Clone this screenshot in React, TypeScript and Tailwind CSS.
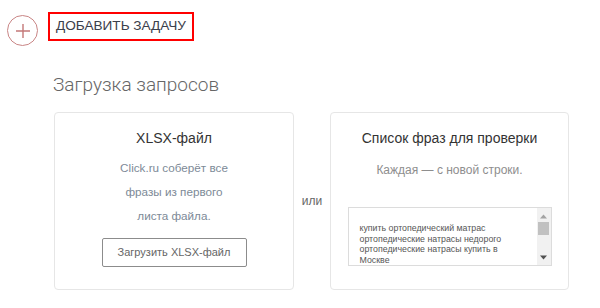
import React from "react";

export default function App() {
  return (
    <div className="w-[600px] h-[308px] bg-white overflow-hidden font-['Liberation_Sans',Arial,sans-serif]">
      <div className="flex items-start pt-[12px] pl-[7px]">
        <div className="mt-[3px] w-[31px] h-[31px] rounded-full border-[1.5px] border-[#c98585] flex items-center justify-center">
          <svg width="16" height="16" viewBox="0 0 16 16">
            <path d="M8 1v14M1 8h14" stroke="#c47878" strokeWidth="1.4" fill="none" />
          </svg>
        </div>
        <div className="ml-[10px] w-[146px] h-[29px] border-2 border-[#ff0000] flex items-center justify-center text-[13.6px] text-[#3b404a]">
          ДОБАВИТЬ ЗАДАЧУ
        </div>
      </div>

      <div className="ml-[53px] mt-[28px] h-[22px] leading-[22px] text-[19px] font-light text-[#666] font-['Roboto',sans-serif]">
        Загрузка запросов
      </div>

      <div className="ml-[54px] mt-[16px] flex items-center">
        <div className="w-[240px] h-[178px] border border-[#e6e6e6] rounded-[4px] flex flex-col items-center pt-[15px]">
          <div className="text-[14px] leading-[20px] text-[#333]">XLSX-файл</div>
          <div className="mt-[8px] text-[11.7px] leading-[24px] text-[#7d8a97] text-center">
            <div>Click.ru соберёт все</div>
            <div>фразы из первого</div>
            <div>листа файла.</div>
          </div>
          <div className="mt-[10px] w-[145px] h-[29px] border border-[#8c8c8c] rounded-[2px] flex items-center justify-center text-[11px] text-[#666]">
            Загрузить XLSX-файл
          </div>
        </div>

        <div className="w-[36px] text-center text-[12px] text-[#666]">или</div>

        <div className="w-[239px] h-[178px] border border-[#e6e6e6] rounded-[4px] flex flex-col items-center pt-[15px]">
          <div className="text-[14px] leading-[20px] text-[#333]">Список фраз для проверки</div>
          <div className="mt-[12px] text-[12px] leading-[20px] text-[#8e8e8e]">Каждая — с новой строки.</div>
          <div className="mt-[27px] w-[204px] h-[59px] border border-[#dcdcdc] flex overflow-hidden">
            <div className="flex-1 pl-[11px] pt-[15px] text-[8.8px] leading-[10.7px] text-[#555] overflow-hidden">
              <div>купить ортопедический матрас</div>
              <div>ортопедические натрасы недорого</div>
              <div>ортопедические натрасы купить в</div>
              <div>Москве</div>
            </div>
            <div className="w-[14px] bg-[#f1f1f1] flex flex-col items-center">
              <svg width="7" height="5" viewBox="0 0 7 5" className="mt-[6px]">
                <path d="M0 4.5L3.5 0.5L7 4.5Z" fill="#a3a3a3" />
              </svg>
              <div className="mt-[3px] w-[11px] h-[13px] bg-[#c1c1c1]" />
              <div className="flex-1" />
              <svg width="7" height="5" viewBox="0 0 7 5" className="mb-[5px]">
                <path d="M0 0.5L3.5 4.5L7 0.5Z" fill="#505050" />
              </svg>
            </div>
          </div>
        </div>
      </div>
    </div>
  );
}
